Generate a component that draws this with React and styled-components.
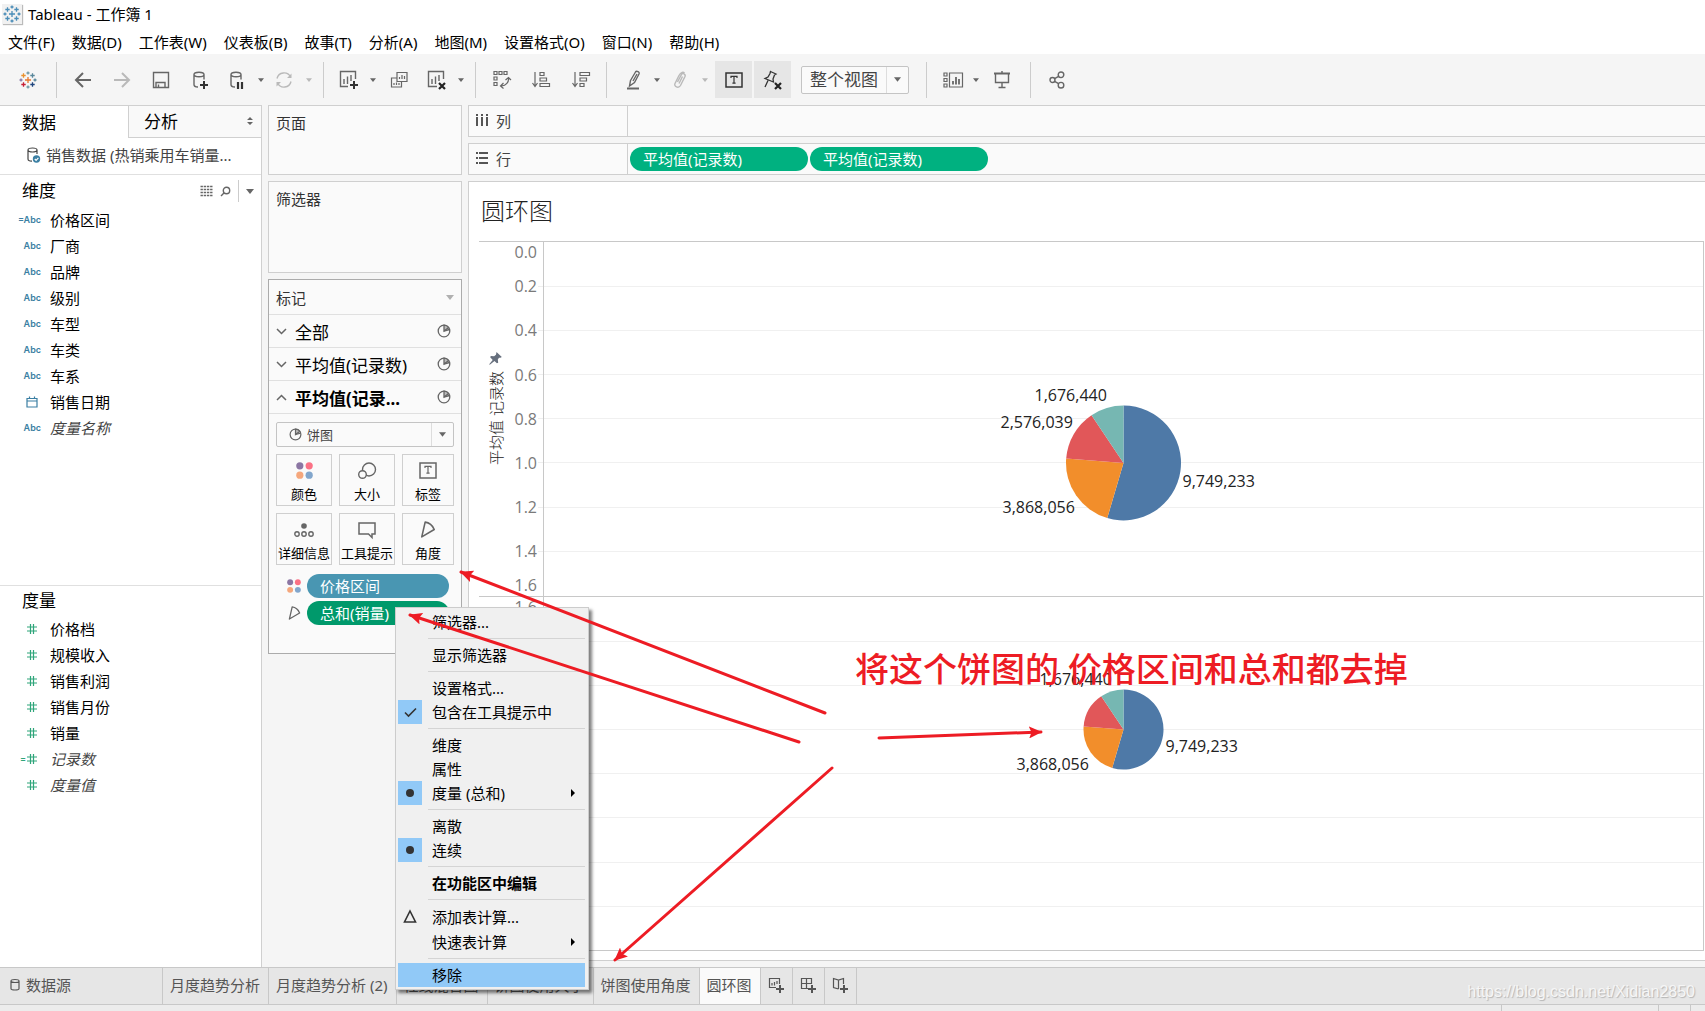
import React from "react";
import styled, { createGlobalStyle, css } from "styled-components";

const UI = `"Noto Sans", "Noto Sans CJK SC", sans-serif`;
const SHEET = `"Open Sans", "Noto Sans CJK SC", sans-serif`;

const Global = createGlobalStyle`
  *, *::before, *::after { box-sizing: border-box; }
  body { margin: 0; font-family: ${UI}; font-size: 15px; color: #000; overflow: hidden; }
  button, select { font: inherit; color: inherit; margin: 0; padding: 0; border: 0; background: none; }
  h1, h2, ul { margin: 0; padding: 0; font-weight: 400; list-style: none; }
  svg { display: block; flex: none; overflow: visible; }
`;

/* ---------- frame ---------- */
const Window = styled.div`
  position: relative;
  display: flex;
  flex-direction: column;
  height: 100vh;
  background: #f5f5f5;
`;
const TitleBar = styled.header`
  display: flex;
  align-items: center;
  gap: 6px;
  height: 28px;
  padding: 0 2px;
  background: #fff;
  line-height: 24px;
  white-space: nowrap;
`;
const AppIcon = styled.span`
  display: flex;
  padding: 1px;
  background: #f1f1f1;
  box-shadow: 1px 1px 1px #bbb;
`;
const MenuBar = styled.nav`
  display: flex;
  align-items: center;
  gap: 17px;
  height: 26px;
  padding: 0 8px;
  background: #fff;
  white-space: nowrap;
`;
const Toolbar = styled.div`
  display: flex;
  align-items: center;
  height: 51px;
  color: #666;
`;
const ToolGroup = styled.div`
  display: flex;
  align-items: center;
  height: 36px;
  padding: 0 ${(p) => p.$end || 0}px 0 ${(p) => p.$start || 0}px;
  border-right: ${(p) => (p.$last ? 0 : 1)}px solid #ccc;
`;
const Tool = styled.button`
  display: flex;
  align-items: center;
  justify-content: center;
  width: ${(p) => p.$w || 40}px;
  height: 37px;
  margin-right: ${(p) => p.$gap || 0}px;
  background: ${(p) => (p.$on ? "#e6e6e6" : "transparent")};
  color: ${(p) => (p.$dim ? "#b9b9b9" : p.$on ? "#333" : "#666")};
`;
const Combo = styled.label`
  position: relative;
  display: flex;
  width: ${(p) => (p.$w ? p.$w + "px" : "auto")};
  height: ${(p) => p.$h}px;
  margin-left: ${(p) => p.$ml || 0}px;
  border: 1px solid #c4c4c4;
  border-radius: 2px;
  background: #fafafa;
  color: #444;
`;
const ComboSelect = styled.select`
  flex: 1;
  min-width: 0;
  padding-left: ${(p) => p.$pl}px;
  appearance: none;
  font-size: ${(p) => p.$size}px;
`;
const ComboIcon = styled.span`
  position: absolute;
  left: 12px;
  top: 5px;
  color: #666;
`;
const ComboCaret = styled.span`
  display: flex;
  align-items: center;
  justify-content: center;
  width: 22px;
  border-left: 1px solid #ddd;
  color: #666;
`;

/* ---------- body ---------- */
const Body = styled.div`
  display: flex;
  flex: 1;
  min-height: 0;
  gap: 6px;
`;
const DataPane = styled.aside`
  display: flex;
  flex-direction: column;
  flex: none;
  width: 262px;
  border-top: 1px solid #d0d0d0;
  border-right: 1px solid #d0d0d0;
  background: #fff;
`;
const PaneTabs = styled.div`
  display: grid;
  grid-template-columns: 128px 1fr;
  height: 32px;
`;
const PaneTab = styled.button`
  display: flex;
  align-items: center;
  justify-content: space-between;
  padding: 0 8px 2px ${(p) => (p.$active ? 22 : 15)}px;
  font-size: 17px;
  ${(p) =>
    !p.$active &&
    css`
      background: #f9f9f9;
      border-left: 1px solid #d0d0d0;
      border-bottom: 1px solid #d0d0d0;
    `}
`;
const Source = styled.button`
  display: flex;
  align-items: center;
  gap: 5px;
  height: 37px;
  padding: 0 27px 3px 26px;
  border-bottom: 1px solid #e0e0e0;
  color: #444;
  text-align: left;
  white-space: nowrap;
`;
const FieldSection = styled.section`
  height: ${(p) => (p.$h ? p.$h + "px" : "auto")};
  flex: ${(p) => (p.$h ? "none" : 1)};
  border-bottom: ${(p) => (p.$h ? 1 : 0)}px solid #e0e0e0;
`;
const SectionHead = styled.div`
  display: flex;
  align-items: center;
  height: ${(p) => p.$h}px;
  padding-left: 22px;
  color: #666;
`;
const SectionTitle = styled.h2`
  flex: 1;
  font-size: 17px;
  line-height: 24px;
  color: #000;
`;
const HeadTools = styled.div`
  display: flex;
  align-items: center;
  gap: 7px;
`;
const HeadCaret = styled.button`
  display: flex;
  align-items: center;
  justify-content: center;
  width: 23px;
  height: 22px;
  border-left: 1px solid #ccc;
`;
const Field = styled.li`
  display: grid;
  grid-template-columns: 41px 1fr;
  align-items: center;
  column-gap: 9px;
  height: 26px;
  line-height: 24px;
  white-space: nowrap;
  font-style: ${(p) => (p.$italic ? "italic" : "normal")};
  color: ${(p) => (p.$italic ? "#444" : "#000")};
`;
const FieldIcon = styled.span`
  display: flex;
  justify-content: flex-end;
  align-items: center;
  height: 14px;
  padding-right: ${(p) => p.$pad || 0}px;
  font: 600 9px/14px Inter, "Liberation Sans", sans-serif;
  color: ${(p) => (p.$green ? "#2fa57a" : "#3b7fa3")};
`;

const Cards = styled.div`
  display: flex;
  flex-direction: column;
  gap: 6px;
  flex: none;
  width: 194px;
`;
const Shelf = styled.section`
  height: ${(p) => p.$h}px;
  padding: 7px;
  border: 1px solid #cfcfcf;
  background: #fafafa;
  color: #333;
  line-height: 20px;
`;
const Marks = styled.section`
  height: 375px;
  border: 1px solid #ababab;
  background: #fafafa;
`;
const MarksHead = styled.div`
  display: flex;
  align-items: center;
  justify-content: space-between;
  height: 34px;
  padding: 0 7px;
  color: #333;
  svg {
    color: #b0b0b0;
  }
`;
const MarksRow = styled.button`
  display: grid;
  grid-template-columns: 14px 1fr 14px;
  column-gap: 5px;
  align-items: center;
  width: 100%;
  height: 33px;
  padding: 0 10px 0 7px;
  border-top: 1px solid #e0e0e0;
  font-size: 17px;
  font-weight: ${(p) => (p.$bold ? 700 : 400)};
  text-align: left;
  white-space: nowrap;
  svg {
    color: #666;
  }
`;
const MarksBody = styled.div`
  display: flex;
  flex-direction: column;
  padding: 8px 7px 0;
  border-top: 1px solid #e0e0e0;
`;
const MarkGrid = styled.div`
  display: grid;
  grid-template-columns: 56px 56px 52px;
  gap: 7px;
  margin: 7px 0 9px;
`;
const MarkButton = styled.button`
  display: flex;
  flex-direction: column;
  align-items: center;
  justify-content: space-between;
  height: 52px;
  padding: 7px 0 1px;
  border: 1px solid #cfcfcf;
  font-size: 13px;
  line-height: 20px;
  color: #666;
  white-space: nowrap;
  span {
    color: #000;
  }
`;
const MarkPills = styled.div`
  display: grid;
  grid-template-columns: 25px 142px;
  column-gap: 6px;
  row-gap: 3px;
  align-items: center;
  justify-items: end;
  color: #666;
`;
const Pill = styled.button`
  width: ${(p) => p.$w}px;
  height: 24px;
  padding: 0 13px;
  border-radius: 12px;
  background: ${(p) => p.$bg};
  color: #fff;
  line-height: 24px;
  text-align: left;
  white-space: nowrap;
`;

const Work = styled.main`
  display: flex;
  flex-direction: column;
  flex: 1;
  min-width: 0;
  gap: 6px;
  padding-bottom: 6px;
`;
const RowShelf = styled.section`
  display: grid;
  grid-template-columns: 159px 1fr;
  height: 32px;
  border: 1px solid #cfcfcf;
  border-right: 0;
  background: #fafafa;
`;
const ShelfName = styled.div`
  display: flex;
  align-items: center;
  gap: 8px;
  padding: 0 0 2px 7px;
  border-right: 1px solid #cfcfcf;
  color: #444;
`;
const ShelfPills = styled.div`
  display: flex;
  align-items: center;
  gap: 2px;
  padding-left: 2px;
`;
const Sheet = styled.section`
  display: flex;
  flex-direction: column;
  flex: 1;
  min-height: 0;
  padding: 0 1px 9px 10px;
  border: 1px solid #cfcfcf;
  border-right: 0;
  background: #fff;
  font-family: ${SHEET};
`;
const SheetTitle = styled.h1`
  height: 59px;
  padding: 0 2px;
  font-size: 24px;
  font-weight: 300;
  line-height: 58px;
  color: #222;
`;
const Viz = styled.div`
  display: grid;
  grid-template-columns: 65px 1fr;
  grid-template-rows: 1fr 1fr;
  flex: 1;
  min-height: 0;
  border-top: 1px solid #c8c8c8;
  border-right: 1px solid #c8c8c8;
`;
const AxisCell = styled.div`
  display: grid;
  grid-template-columns: 33px 1fr;
  border-right: 1px solid #c8c8c8;
  border-bottom: 1px solid #c8c8c8;
  min-height: 0;
`;
const AxisTitle = styled.div`
  display: flex;
  flex-direction: column;
  align-items: center;
  justify-content: center;
  gap: 6px;
  padding-bottom: 20px;
  color: #666f7d;
`;
const AxisName = styled.span`
  writing-mode: vertical-rl;
  text-orientation: sideways;
  transform: rotate(180deg);
  font-size: 15px;
  font-weight: 300;
  line-height: 16px;
  color: #222;
`;
const Plot = styled.div`
  position: relative;
  min-height: 0;
  border-bottom: 1px solid #c8c8c8;
`;
const Fill = styled.svg`
  width: 100%;
  height: 100%;
  font-size: 16px;
  font-family: ${SHEET};
`;

/* ---------- bottom ---------- */
const SheetTabs = styled.div`
  display: flex;
  height: 38px;
  border-top: 1px solid #c8c8c8;
  border-bottom: 1px solid #c8c8c8;
  background: #e6e6e6;
`;
const SheetTab = styled.button`
  display: flex;
  align-items: center;
  gap: 3px;
  min-width: ${(p) => p.$w || 0}px;
  padding: 0 8px 3px 7px;
  border-right: 1px solid #c8c8c8;
  background: ${(p) => (p.$active ? "#fafafa" : "transparent")};
  color: #555;
  white-space: nowrap;
`;
const StatusBar = styled.footer`
  display: flex;
  justify-content: flex-end;
  height: 6px;
  background: #ececec;
`;
const StatusCell = styled.i`
  width: ${(p) => p.$w}px;
  border-left: 1px solid #c8c8c8;
`;
const Watermark = styled.a`
  position: absolute;
  right: 10px;
  bottom: 8px;
  font: 16px/22px "Liberation Sans", Arial, sans-serif;
  color: #f6f6f6;
  text-decoration: none;
  text-shadow: 1px 1px 1px #b4b4b4;
`;

/* ---------- context menu ---------- */
const Menu = styled.div`
  position: absolute;
  left: 395px;
  top: 607px;
  width: 194px;
  padding: 2px 3px 2px 2px;
  border: 1px solid #ccc;
  background: #f0f0f0;
  box-shadow: 3px 3px 3px rgba(0, 0, 0, 0.5);
`;
const MenuItem = styled.button`
  display: grid;
  grid-template-columns: 24px 1fr 12px;
  column-gap: 10px;
  align-items: center;
  width: 100%;
  height: ${(p) => (p.$tall ? 25 : 24)}px;
  padding-right: 2px;
  font-weight: ${(p) => (p.$bold ? 700 : 400)};
  line-height: 24px;
  text-align: left;
  white-space: nowrap;
  background: ${(p) => (p.$hot ? "#91c9f7" : "transparent")};
`;
const Mark = styled.span`
  display: flex;
  align-items: center;
  justify-content: center;
  height: 24px;
  background: ${(p) => (p.$on ? "#91c9f7" : "transparent")};
  color: #333;
`;
const MenuRule = styled.hr`
  height: 1px;
  margin: 4px 0 4px 30px;
  border: 0;
  background: #d4d4d4;
`;

/* ---------- annotations ---------- */
const Notes = styled.svg`
  position: absolute;
  left: 0;
  top: 0;
  width: 100%;
  height: 100%;
  pointer-events: none;
`;
const NoteText = styled.p`
  position: absolute;
  left: 855px;
  top: 645px;
  margin: 0;
  font-size: 34px;
  font-weight: 500;
  line-height: 48px;
  color: #ed1c24;
  white-space: nowrap;
`;

/* ---------- icons ---------- */
const Svg = ({ w = 18, h = w, children, sw = 1.4, ...r }) => (
  <svg width={w} height={h} viewBox={`0 0 ${w} ${h}`} fill="none" stroke="currentColor" strokeWidth={sw} aria-hidden="true" {...r}>
    {children}
  </svg>
);
const Caret = ({ w = 6 }) => (
  <svg width={w} height={w === 6 ? 4 : 5} viewBox="0 0 8 5" fill="currentColor" aria-hidden="true">
    <path d="M0 0h8L4 5z" />
  </svg>
);
const Logo = ({ mono }) => {
  const c = (x) => (mono ? "#4a8db8" : x);
  const plus = (x, y, r, col, k) => <path key={k} d={`M${x - r} ${y}h${2 * r}M${x} ${y - r}v${2 * r}`} stroke={c(col)} />;
  return (
    <Svg w={18} sw={1.3}>
      {plus(9, 9, 3, "#e8762b", 0)}
      {plus(9, 2, 1.5, "#7099a6", 1)}
      {plus(9, 16, 1.5, "#7099a6", 2)}
      {plus(2, 9, 1.5, "#8a7aa8", 3)}
      {plus(16, 9, 1.5, "#59879b", 4)}
      {plus(4.5, 4.5, 2.2, "#eb912c", 5)}
      {plus(13.5, 4.5, 2.2, "#59879b", 6)}
      {plus(4.5, 13.5, 2.2, "#c72037", 7)}
      {plus(13.5, 13.5, 2.2, "#1f457e", 8)}
    </Svg>
  );
};
const PlusMark = ({ x, y, c = "#333" }) => <path d={`M${x - 4} ${y}h8M${x} ${y - 4}v8`} stroke={c} strokeWidth="2" />;
const CrossMark = ({ x, y }) => <path d={`M${x - 3} ${y - 3}l6 6m0-6l-6 6`} stroke="#222" strokeWidth="2.2" />;
const Cyl = () => <path d="M3 3.5v10c0 1.5 1.5 2.5 4 2.5M13 3.5v5M3 3.5C3 2 5 1.2 8 1.2s5 .8 5 2.3-2 2.3-5 2.3-5-.8-5-2.3z" />;
const PieIcon = ({ s = 14 }) => (
  <svg width={s} height={s} viewBox="0 0 14 14" fill="none" stroke="currentColor" strokeWidth="1.3" aria-hidden="true">
    <circle cx="7" cy="7" r="5.8" />
    <path d="M7 7V1.2A5.8 5.800 0 0 1 11.7 3.600z" fill="#bbb" />
    <path d="M7 7l5.5-1.5" />
  </svg>
);
const Dots = ({ s = 16 }) => (
  <svg width={s} height={s} viewBox="0 0 16 16" aria-hidden="true">
    <circle cx="3.6" cy="3.6" r="3.4" fill="#8b76a3" />
    <circle cx="12.4" cy="3.6" r="3.4" fill="#fb7185" />
    <circle cx="3.6" cy="12.4" r="3.4" fill="#f5a77c" />
    <circle cx="12.4" cy="12.4" r="3.4" fill="#82a6cc" />
  </svg>
);
const AngleIcon = ({ s = 14 }) => (
  <svg width={s} height={s + 1} viewBox="0 0 14 15" fill="none" stroke="currentColor" strokeWidth="1.4" strokeLinejoin="round" aria-hidden="true">
    <path d="M4.500 1L1.500 14L12.500 7.500C11 4 8.500 1.500 4.500 1z" />
  </svg>
);
const Chev = ({ up }) => (
  <Svg w={11} h={7} sw={1.5}>
    <path d={up ? "M1 6l4.5-4.5L10 6" : "M1 1l4.5 4.5L10 1"} />
  </Svg>
);
const Hash = () => (
  <Svg w={12} h={12} sw={1.2}>
    <path d="M1 4h10M1 8h10M4.5 1v10M7.5 1v10" />
  </Svg>
);
const Lines = ({ v }) => (
  <svg width="12" height="12" viewBox="0 0 12 12" fill="#555" aria-hidden="true">
    <g transform={v ? "rotate(90 6 6)" : undefined}>
      {[0, 5, 10].map((y) => (
        <path key={y} d={`M0 ${y}h2v2h-2zM3 ${y}h9v2h-9z`} />
      ))}
    </g>
  </svg>
);
const TBox = ({ w = 18, h = 15 }) => (
  <Svg w={w} h={h} sw={1.5}>
    <rect x="1" y="1" width={w - 2} height={h - 2} />
    <path d={`M${w / 2 - 3} 6V4.4h6V6M${w / 2} 4.4v6.8m-1.6 0h3.2`} strokeWidth="1.2" />
  </Svg>
);
const Pin = () => (
  <svg width="13" height="13" viewBox="0 0 13 13" fill="currentColor" aria-hidden="true">
    <path d="M7.5 0l5.3 5-1.3.8-1.5 0-1.200 1.700.400 3.300-1.300.400-2.400-2.300L.800 12.800.200 12.300l3.500-4.300L1.200 5.300l.6-1.300 3.300.300 1.900-1.500z" />
  </svg>
);

/* ---------- data ---------- */
const menus = ["文件(F)", "数据(D)", "工作表(W)", "仪表板(B)", "故事(T)", "分析(A)", "地图(M)", "设置格式(O)", "窗口(N)", "帮助(H)"];
const dims = [
  ["calc", "价格区间"], ["abc", "厂商"], ["abc", "品牌"], ["abc", "级别"], ["abc", "车型"],
  ["abc", "车类"], ["abc", "车系"], ["date", "销售日期"], ["abc", "度量名称", true],
];
const measures = [
  ["num", "价格档"], ["num", "规模收入"], ["num", "销售利润"], ["num", "销售月份"],
  ["num", "销量"], ["numcalc", "记录数", true], ["num", "度量值", true],
];
const slices = [
  { v: 9749233, c: "#4e79a7" }, { v: 3868056, c: "#f28e2b" },
  { v: 2576039, c: "#e15759" }, { v: 1676440, c: "#76b7b2" },
];
const menuItems = [
  { t: "筛选器..." }, null, { t: "显示筛选器" }, null, { t: "设置格式..." },
  { t: "包含在工具提示中", m: "check" }, null, { t: "维度" }, { t: "属性" },
  { t: "度量 (总和)", m: "dot", sub: true }, null, { t: "离散" }, { t: "连续", m: "dot" }, null,
  { t: "在功能区中编辑", bold: true }, null, { t: "添加表计算...", m: "delta", tall: true },
  { t: "快速表计算", sub: true, tall: true }, null, { t: "移除", hot: true },
];
const arrows = [
  [825, 713, 461, 572], [799, 742, 410, 615], [879, 738, 1041, 732], [832, 768, 615, 960],
];

function FieldRow({ kind, name, italic }) {
  const num = kind.startsWith("num");
  return (
    <Field $italic={italic}>
      <FieldIcon $green={num} $pad={num || kind === "date" ? 3 : 0}>
        {kind === "abc" && "Abc"}
        {kind === "calc" && "=Abc"}
        {kind === "date" && (
          <Svg w={12} h={12} sw={1.2}>
            <path d="M1 2.5h10v8.5h-10zM1 5h10M3.5 .5v2M8.5 .5v2" />
          </Svg>
        )}
        {kind === "numcalc" && "="}
        {num && <Hash />}
      </FieldIcon>
      <span>{name}</span>
    </Field>
  );
}

function Pie({ cy, r, labels }) {
  const total = slices.reduce((a, s) => a + s.v, 0);
  let a = 0;
  const paths = slices.map((s) => {
    const b = a + (s.v / total) * Math.PI * 2;
    const big = b - a > Math.PI ? 1 : 0;
    const d = `M0 0L${r * Math.sin(a)} ${-r * Math.cos(a)}A${r} ${r} 0 ${big} 1 ${r * Math.sin(b)} ${-r * Math.cos(b)}Z`;
    a = b;
    return <path key={s.c} d={d} fill={s.c} />;
  });
  return (
    <svg x="50%" y={cy} width="1" height="1" overflow="visible">
      {paths}
      {labels.map(([t, x, y]) => (
        <text key={t} x={x} y={y} fill="#222">{t}</text>
      ))}
    </svg>
  );
}

function Pane({ cy, r, labels }) {
  return (
    <Plot>
      <Fill>
        {[1, 2, 3, 4, 5, 6, 7].map((i) => (
          <line key={i} x1="0" x2="100%" y1={`${i * 12.5}%`} y2={`${i * 12.5}%`} stroke="#f0f0f0" shapeRendering="crispEdges" />
        ))}
        <Pie cy={cy} r={r} labels={labels} />
      </Fill>
    </Plot>
  );
}

function Ticks({ values }) {
  return (
    <Fill>
      {values.map((t, i) => {
        const first = i === 0;
        const last = i === 8;
        return (
          <g key={t}>
            {!first && !last && (
              <line x1="26" x2="31" y1={`${i * 12.5}%`} y2={`${i * 12.5}%`} stroke="#eee" shapeRendering="crispEdges" />
            )}
            <text x="25" y={`${i * 12.5}%`} dy={first ? 16 : last ? -5 : 6} textAnchor="end" fill="#7a7a7a">
              {t}
            </text>
          </g>
        );
      })}
    </Fill>
  );
}

export default function App() {
  const ticks = ["0.0", "0.2", "0.4", "0.6", "0.8", "1.0", "1.2", "1.4", "1.6"];
  return (
    <Window>
      <Global />
      <TitleBar>
        <AppIcon><Logo mono /></AppIcon>
        <span>Tableau - 工作簿 1</span>
      </TitleBar>
      <MenuBar>{menus.map((m) => <button key={m}>{m}</button>)}</MenuBar>

      <Toolbar>
        <ToolGroup>
          <Tool $w={56} aria-label="Tableau"><Logo /></Tool>
        </ToolGroup>
        <ToolGroup $start={6} $end={6}>
          <Tool $w={39} aria-label="撤消"><Svg w={18} sw={2}><path d="M17 9H2M9 2L2 9l7 7" /></Svg></Tool>
          <Tool $w={39} $dim aria-label="重做"><Svg w={18} sw={2}><path d="M1 9h15M9 2l7 7-7 7" /></Svg></Tool>
          <Tool $w={39} aria-label="保存"><Svg w={18}><path d="M1.5 1.5h15v15h-15zM4 16.5v-5h9v5M6.5 16v-2.5" /></Svg></Tool>
          <Tool $w={39} aria-label="新建数据源"><Svg w={18}><Cyl /><PlusMark x={13} y={14} /></Svg></Tool>
          <Tool $w={36} aria-label="暂停"><Svg w={18}><Cyl /><path d="M10 11v7M14 11v7" stroke="#333" strokeWidth="2.2" /></Svg></Tool>
          <Tool $w={12} aria-label="更多"><Caret /></Tool>
          <Tool $w={34} $dim aria-label="刷新"><Svg w={18}><path d="M2 7.5A7.2 7.2 0 0 1 15.5 6M16 10.5A7.2 7.2 0 0 1 2.5 12" /><path d="M16.5 2.5V7h-4.5zM1.5 15.5V11H6z" fill="currentColor" stroke="none" /></Svg></Tool>
          <Tool $w={16} $dim aria-label="更多"><Caret /></Tool>
        </ToolGroup>
        <ToolGroup $start={7} $end={8}>
          <Tool $w={36} aria-label="新建工作表"><Svg w={20} h={20}><path d="M9 16.5H1.5v-15h15V9M5 14V9M8.5 14V6.5M12 11V5" /><PlusMark x={15} y={15} /></Svg></Tool>
          <Tool $w={12} aria-label="更多"><Caret /></Tool>
          <Tool $w={40} aria-label="复制"><Svg w={18} sw={1.2}><path d="M7 1.5h10v9h-10zM9.5 8V6M12 8V4M14.5 8V5M7 7H1.5v9h10v-5.5M4 14v-2M6.5 14v-2.5M9 14v-2" /></Svg></Tool>
          <Tool $w={36} aria-label="清除"><Svg w={20} h={20}><path d="M10 16.5H1.5v-15h15V9M5 14V9M8.5 14V6.5M12 11V5" /><CrossMark x={15} y={16} /></Svg></Tool>
          <Tool $w={12} aria-label="更多"><Caret /></Tool>
        </ToolGroup>
        <ToolGroup $start={6} $end={6}>
          <Tool $w={39} aria-label="交换"><Svg w={18} h={19} sw={1.2}><path d="M1 1.500h3v3H1zM6 1.500h3v3h-3zM11 1.500h3v3h-3zM1 7h3v3H1zM1 12.500h3v3H1zM15.500 8c.5 4-2.500 7.500-7 8M10.500 13l-3 3 3 2.500M12.500 10l3-2.500 2.500 2.500" /></Svg></Tool>
          <Tool $w={40} aria-label="升序排序"><Svg w={18} sw={1.2}><path d="M3 1v14M.5 12L3 15.5 5.5 12M8 1.5h4v3H8zM8 7h6.5v3H8zM8 12.5h9.5v3H8z" /></Svg></Tool>
          <Tool $w={39} aria-label="降序排序"><Svg w={18} sw={1.2}><path d="M3 1v14M.5 12L3 15.5 5.5 12M8 1.5h9.5v3H8zM8 7h6.5v3H8zM8 12.5h4v3H8z" /></Svg></Tool>
        </ToolGroup>
        <ToolGroup $start={10} $end={17}>
          <Tool $w={34} aria-label="突出显示"><Svg w={16} h={20}><path d="M4.5 10.500L9.500 2c1-1.500 4.500 0 3.500 2L8.500 12.500l-5 3.500zM7 11l4-7" /><path d="M1 18.500h12" strokeWidth="2" /></Svg></Tool>
          <Tool $w={12} aria-label="更多"><Caret /></Tool>
          <Tool $w={34} $dim aria-label="组成员"><Svg w={14} h={18}><path d="M4.5 11L8.500 3.500c1-2 4.500-.5 3.500 2L7.500 14.500c-2 3.500-7 1-5.500-2L6 4.500c2-4 4.500-3.500 5.500-2.500M6 12.500l3.500-7" /></Svg></Tool>
          <Tool $w={16} $gap={2} $dim aria-label="更多"><Caret /></Tool>
          <Tool $w={37} $gap={2} $on aria-label="显示标记标签"><TBox w={18} h={16} /></Tool>
          <Tool $w={37} $on aria-label="固定轴"><Svg w={20} h={20} sw={1.3}><path d="M7.5 1.5l5.500 2.500-1.500 1-1.500 4 .5 3-8.500-3.500 3-1.500 2-3.500zM5 10.500L2 17" /><CrossMark x={15} y={16} /></Svg></Tool>
          <Combo $w={108} $h={28} $ml={10}>
            <ComboSelect $pl={8} $size={17} aria-label="适合"><option>整个视图</option></ComboSelect>
            <ComboCaret><Caret w={7} /></ComboCaret>
          </Combo>
        </ToolGroup>
        <ToolGroup $start={9} $end={8}>
          <Tool $w={34} aria-label="显示卡"><Svg w={20} h={16} sw={1.2}><path d="M1 1h3v3H1zM1 6.5h3v3H1zM1 12h3v3H1zM6.5 1h13v14h-13z" /><path d="M10 12.5V9M13 12.5V5M16 12.5V7" strokeWidth="1.8" /></Svg></Tool>
          <Tool $w={12} aria-label="更多"><Caret /></Tool>
          <Tool $w={40} aria-label="演示模式"><Svg w={18}><path d="M1 2.5h16" strokeWidth="2" /><path d="M2.5 3v8.5h13V3M9 11.5V16M5.5 16.5h7M9 0v2" /></Svg></Tool>
        </ToolGroup>
        <ToolGroup $start={6} $last>
          <Tool aria-label="共享"><Svg w={16} h={18}><circle cx="3.5" cy="9" r="2.5" /><circle cx="12" cy="3.8" r="2.8" /><circle cx="12" cy="14.2" r="2.8" /><path d="M5.6 7.7l4-2.4M5.6 10.3l4 2.4" /></Svg></Tool>
        </ToolGroup>
      </Toolbar>

      <Body>
        <DataPane>
          <PaneTabs>
            <PaneTab $active>数据</PaneTab>
            <PaneTab>
              分析
              <svg width="6" height="8" viewBox="0 0 6 8" fill="#666" aria-hidden="true"><path d="M3 0l3 3H0zM3 8l3-3H0z" /></svg>
            </PaneTab>
          </PaneTabs>
          <Source>
            <Svg w={15} h={16} sw={1.2}>
              <path d="M2 3v9c0 1.5 1.5 2.2 4 2.2M11 3v4M2 3c0-1.3 2-2 4.5-2s4.5.7 4.5 2-2 2-4.5 2S2 4.300 2 3z" />
              <circle cx="10.5" cy="12" r="3.7" fill="#3b7fa3" stroke="none" />
              <path d="M8.8 12l1.3 1.3 2.3-2.5" stroke="#fff" />
            </Svg>
            <span>销售数据 (热销乘用车销量...</span>
          </Source>
          <FieldSection $h={411}>
            <SectionHead $h={32}>
              <SectionTitle>维度</SectionTitle>
              <HeadTools>
                <Svg w={13} h={10}>{[0.5, 3.5, 6.5, 9.5].map((y) => <path key={y} d={`M.5 ${y}h12`} strokeDasharray="2.400 .8" strokeWidth="1.300" />)}</Svg>
                <Svg w={11} h={11}><circle cx="6.5" cy="4.5" r="3.2" /><path d="M4.2 6.8L1 10" /></Svg>
                <HeadCaret aria-label="维度菜单"><Caret w={8} /></HeadCaret>
              </HeadTools>
            </SectionHead>
            <ul>{dims.map(([k, n, i]) => <FieldRow key={n} kind={k} name={n} italic={i} />)}</ul>
          </FieldSection>
          <FieldSection>
            <SectionHead $h={30}><SectionTitle>度量</SectionTitle></SectionHead>
            <ul>{measures.map(([k, n, i]) => <FieldRow key={n} kind={k} name={n} italic={i} />)}</ul>
          </FieldSection>
        </DataPane>

        <Cards>
          <Shelf $h={70}>页面</Shelf>
          <Shelf $h={92}>筛选器</Shelf>
          <Marks>
            <MarksHead>标记<Caret w={8} /></MarksHead>
            <MarksRow><Chev /><span>全部</span><PieIcon /></MarksRow>
            <MarksRow><Chev /><span>平均值(记录数)</span><PieIcon /></MarksRow>
            <MarksRow $bold><Chev up /><span>平均值(记录...</span><PieIcon /></MarksRow>
            <MarksBody>
              <Combo $h={25}>
                <ComboIcon><PieIcon s={13} /></ComboIcon>
                <ComboSelect $pl={30} $size={13} aria-label="标记类型"><option>饼图</option></ComboSelect>
                <ComboCaret><Caret w={7} /></ComboCaret>
              </Combo>
              <MarkGrid>
                <MarkButton><Dots s={17} /><span>颜色</span></MarkButton>
                <MarkButton><Svg w={18}><circle cx="11" cy="7.5" r="6.5" /><circle cx="4.5" cy="12.5" r="3.8" fill="#fafafa" /></Svg><span>大小</span></MarkButton>
                <MarkButton><TBox w={18} h={17} /><span>标签</span></MarkButton>
                <MarkButton>
                  <Svg w={20} h={18}><circle cx="10" cy="5" r="2.8" fill="currentColor" stroke="none" /><circle cx="3" cy="13" r="2.2" /><circle cx="10" cy="13" r="2.2" /><circle cx="17" cy="13" r="2.2" /></Svg>
                  <span>详细信息</span>
                </MarkButton>
                <MarkButton><Svg w={18} h={18} sw={1.5}><path d="M1 2h16v11h-3v3.500l-3.500-3.500H1z" /></Svg><span>工具提示</span></MarkButton>
                <MarkButton><AngleIcon s={16} /><span>角度</span></MarkButton>
              </MarkGrid>
              <MarkPills>
                <Dots s={14} />
                <Pill $w={142} $bg="#4996b2">价格区间</Pill>
                <AngleIcon s={13} />
                <Pill $w={142} $bg="#00996b">总和(销量)</Pill>
              </MarkPills>
            </MarksBody>
          </Marks>
        </Cards>

        <Work>
          <RowShelf>
            <ShelfName><Lines v />列</ShelfName>
            <ShelfPills />
          </RowShelf>
          <RowShelf>
            <ShelfName><Lines />行</ShelfName>
            <ShelfPills>
              <Pill $w={178} $bg="#00b180">平均值(记录数)</Pill>
              <Pill $w={178} $bg="#00b180">平均值(记录数)</Pill>
            </ShelfPills>
          </RowShelf>
          <Sheet>
            <SheetTitle>圆环图</SheetTitle>
            <Viz>
              <AxisCell>
                <AxisTitle><Pin /><AxisName>平均值 记录数</AxisName></AxisTitle>
                <Ticks values={ticks} />
              </AxisCell>
              <Pane
                cy="62.5%"
                r={57.5}
                labels={[["1,676,440", -89, -62], ["2,576,039", -123, -35], ["9,749,233", 59, 24], ["3,868,056", -121, 50]]}
              />
              <AxisCell>
                <AxisTitle />
                <Ticks values={[...ticks].reverse()} />
              </AxisCell>
              <Pane
                cy="37.5%"
                r={40}
                labels={[["1,676,440", -84, -45], ["9,749,233", 42, 22], ["3,868,056", -107, 40]]}
              />
            </Viz>
          </Sheet>
        </Work>
      </Body>

      <SheetTabs>
        <SheetTab $w={163}>
          <Svg w={16} h={13} sw={1.2}><path d="M4 3v7.500c0 2 8 2 8 0V3M4 3c0-2 8-2 8 0s-8 2-8 0z" /></Svg>
          数据源
        </SheetTab>
        <SheetTab>月度趋势分析</SheetTab>
        <SheetTab>月度趋势分析 (2)</SheetTab>
        <SheetTab>柱线混合图</SheetTab>
        <SheetTab>饼图使用大小</SheetTab>
        <SheetTab>饼图使用角度</SheetTab>
        <SheetTab $active>圆环图</SheetTab>
        <SheetTab $w={32} aria-label="新建工作表"><Svg w={16} sw={1.2}><path d="M8 10.5H1.5v-9h10V7M4 8.5V6M6.5 8.5V5M9 7V4" /><PlusMark x={12} y={12} c="#555" /></Svg></SheetTab>
        <SheetTab $w={32} aria-label="新建仪表板"><Svg w={16} sw={1.2}><path d="M8 11.5H1.5v-10h10V7M1.5 6.5h10M6.5 1.5v10" /><PlusMark x={12} y={12} c="#555" /></Svg></SheetTab>
        <SheetTab $w={32} aria-label="新建故事"><Svg w={16} sw={1.2}><path d="M6.5 12L1.5 10.5v-9l5 1.5 5-1.5V7M6.5 3v9" /><PlusMark x={12} y={12} c="#555" /></Svg></SheetTab>
      </SheetTabs>
      <StatusBar>
        <StatusCell $w={157} />
        <StatusCell $w={32} />
        <StatusCell $w={15} />
      </StatusBar>
      <Watermark href="#">https://blog.csdn.net/Xidian2850</Watermark>

      <Menu role="menu">
        {menuItems.map((it, i) =>
          it ? (
            <MenuItem key={i} $bold={it.bold} $hot={it.hot} $tall={it.tall} role="menuitem">
              <Mark $on={it.m === "check" || it.m === "dot"}>
                {it.m === "check" && <Svg w={13} h={11} sw={1.6}><path d="M1 5.5l3.5 3.5L12 1.5" /></Svg>}
                {it.m === "dot" && <Svg w={8} h={8}><circle cx="4" cy="4" r="4" fill="#333" stroke="none" /></Svg>}
                {it.m === "delta" && <Svg w={14} h={13} sw={1.6}><path d="M7 1L12.5 12h-11z" /></Svg>}
              </Mark>
              <span>{it.t}</span>
              {it.sub && <svg width="4" height="8" viewBox="0 0 4 8" aria-hidden="true"><path d="M0 0l4 4-4 4z" /></svg>}
            </MenuItem>
          ) : (
            <MenuRule key={i} />
          )
        )}
      </Menu>

      <Notes aria-hidden="true">
        <defs>
          <marker id="tip" markerUnits="userSpaceOnUse" markerWidth="14" markerHeight="12" refX="12" refY="6" orient="auto">
            <path d="M0 0L13 6 0 12 2.5 6z" fill="#ed1c24" />
          </marker>
        </defs>
        {arrows.map(([x1, y1, x2, y2]) => (
          <line key={y2} x1={x1} y1={y1} x2={x2} y2={y2} stroke="#ed1c24" strokeWidth="3" strokeLinecap="round" markerEnd="url(#tip)" />
        ))}
      </Notes>
      <NoteText>将这个饼图的 价格区间和总和都去掉</NoteText>
    </Window>
  );
}
